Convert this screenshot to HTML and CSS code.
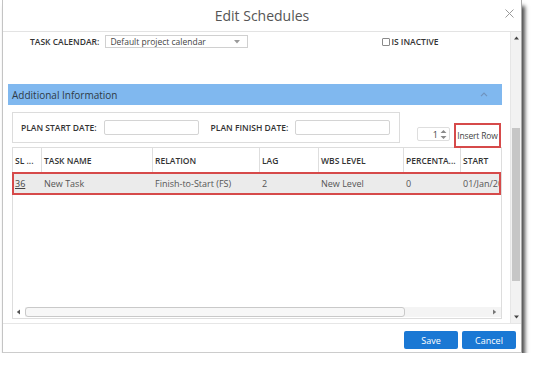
FILE: index.html
```html
<!DOCTYPE html>
<html>
<head>
<meta charset="utf-8">
<link rel="stylesheet" href="styles.css">
</head>
<body>
<div class="page">
  <div class="dialog">
    <div class="header">
      <span class="title">Edit Schedules</span>
      <svg class="close" width="9" height="9" viewBox="0 0 9 9"><path d="M0.5 0.5L8.5 8.5M8.5 0.5L0.5 8.5" stroke="#9a9a9a" stroke-width="1" fill="none"/></svg>
    </div>
    <div class="body">
      <div class="content">
        <div class="cal-row">
          <span class="lbl">TASK CALENDAR:</span>
          <div class="select"><span>Default project calendar</span><svg width="6" height="4" viewBox="0 0 6 4"><path d="M0 0H6L3 3.5Z" fill="#9a9a9a"/></svg></div>
          <div class="chk"><span class="box"></span><span class="lbl">IS INACTIVE</span></div>
        </div>
        <div class="bar">
          <span>Additional Information</span>
          <svg width="8" height="5" viewBox="0 0 8 5"><path d="M1 4.2L4 1.2L7 4.2" stroke="#6f93bd" stroke-width="1.2" fill="none"/></svg>
        </div>
        <div class="toolbar">
          <div class="dates">
            <span class="lbl">PLAN START DATE:</span>
            <span class="input"></span>
            <span class="lbl lbl-finish">PLAN FINISH DATE:</span>
            <span class="input"></span>
          </div>
          <div class="spinner">
            <span class="num">1</span>
            <svg width="7" height="11" viewBox="0 0 7 11"><path d="M0.5 4L3.5 1L6.5 4Z M0.5 7L3.5 10L6.5 7Z" fill="#8a8a8a"/></svg>
          </div>
          <div class="insert">Insert Row</div>
        </div>
        <div class="grid">
          <div class="row head">
            <div class="cell">SL ...</div>
            <div class="cell">TASK NAME</div>
            <div class="cell">RELATION</div>
            <div class="cell">LAG</div>
            <div class="cell">WBS LEVEL</div>
            <div class="cell">PERCENTA...</div>
            <div class="cell">START</div>
          </div>
          <div class="row data">
            <div class="cell"><u>36</u></div>
            <div class="cell">New Task</div>
            <div class="cell">Finish-to-Start (FS)</div>
            <div class="cell">2</div>
            <div class="cell">New Level</div>
            <div class="cell">0</div>
            <div class="cell">01/Jan/2019</div>
          </div>
          <div class="grid-space"></div>
          <div class="hscroll">
            <svg class="arr" width="5" height="6" viewBox="0 0 5 6"><path d="M4 0.5V5.5L0.8 3Z" fill="#555"/></svg>
            <div class="htrack">
              <div class="hthumb"></div>
              <svg class="arr" width="5" height="6" viewBox="0 0 5 6"><path d="M1 0.5V5.5L4.2 3Z" fill="#777"/></svg>
            </div>
          </div>
        </div>
      </div>
      <div class="vscroll">
        <svg width="5" height="4" viewBox="0 0 5 4"><path d="M0 3.5H5L2.5 0.5Z" fill="#444"/></svg>
        <div class="vtrack"><div class="vthumb"></div></div>
        <svg width="5" height="4" viewBox="0 0 5 4"><path d="M0 0.5H5L2.5 3.5Z" fill="#444"/></svg>
      </div>
    </div>
    <div class="footer">
      <button class="btn">Save</button>
      <button class="btn">Cancel</button>
    </div>
  </div>
</div>
</body>
</html>
```
FILE: styles.css
```css
* { box-sizing: border-box; }
body {
  margin: 0;
  background: #fff;
  font-family: "Open Sans", "Liberation Sans", sans-serif;
  color: #333;
}
.page { padding-left: 2px; }
.dialog {
  width: 520px;
  height: 353px;
  background: #fff;
  border-left: 1px solid #c4c4c4;
  border-right: 1px solid #aaa;
  border-bottom: 1px solid #ccc;
  box-shadow: 3px 6px 4px rgba(0,0,0,0.7);
  display: flex;
  flex-direction: column;
}
.header {
  height: 32px;
  flex: none;
  border-bottom: 1px solid #e3e3e3;
  display: flex;
  align-items: center;
  justify-content: center;
  position: relative;
}
.title { font-size: 14px; color: #555; padding-bottom: 1px; }
.close { position: absolute; right: 7px; top: 9px; }
.body {
  flex: none;
  height: 291px;
  display: flex;
}
.content { width: 507px; flex: none; }
.lbl { font-size: 8.5px; font-weight: 600; color: #333; white-space: nowrap; }
.cal-row {
  display: flex;
  align-items: center;
  height: 13px;
  margin-top: 3px;
  padding-left: 27px;
}
.select {
  margin-left: 6px;
  width: 143px;
  height: 13px;
  border: 1px solid #d0d0d0;
  display: flex;
  align-items: center;
  justify-content: space-between;
  padding: 0 7px 0 4px;
  font-size: 8.5px;
  color: #444;
}
.chk { display: flex; align-items: center; margin-left: 134px; }
.box { width: 8px; height: 8px; border: 1px solid #8a8a8a; border-radius: 1px; margin-right: 1px; }
.bar {
  margin: 36px 8px 0 5px;
  height: 21px;
  background: #80b8ef;
  display: flex;
  align-items: center;
  justify-content: space-between;
  padding: 0 14px 0 4px;
  font-size: 10px;
  color: #2f3a46;
}
.toolbar {
  display: flex;
  align-items: flex-end;
  margin: 7px 0 0 9px;
  height: 35px;
}
.dates {
  width: 388px;
  height: 31px;
  margin-bottom: 4px;
  border: 1px solid #dcdcdc;
  display: flex;
  align-items: center;
  padding-left: 8px;
}
.input {
  width: 95px;
  height: 15px;
  border: 1px solid #d4d4d4;
  border-radius: 2px;
  margin-left: 7px;
}
.lbl-finish { margin-left: 12px; }
.spinner {
  margin-left: 17px;
  margin-bottom: 6px;
  width: 33px;
  height: 14px;
  border: 1px solid #dedede;
  border-radius: 2px;
  display: flex;
  align-items: center;
  justify-content: flex-end;
  padding-right: 2px;
  font-size: 9px;
  color: #444;
}
.spinner .num { margin-right: 2px; }
.insert {
  margin-left: 4px;
  width: 47px;
  height: 25px;
  border: 2px solid #d64a4a;
  font-size: 8.5px;
  letter-spacing: -0.15px;
  white-space: nowrap;
  color: #444;
  display: flex;
  align-items: center;
  justify-content: center;
  margin-bottom: -1px;
}
.grid {
  margin-left: 9px;
  width: 490px;
  height: 172px;
  border: 1px solid #dddddd;
  display: flex;
  flex-direction: column;
}
.row {
  display: grid;
  grid-template-columns: 29px 111px 107px 59px 85px 57px 1fr;
  font-size: 8.5px;
  white-space: nowrap;
  overflow: hidden;
}
.row.head { height: 25px; font-weight: 600; color: #333; border-bottom: 1px solid #ddd; }
.row.head .cell { border-right: 1px solid #dedede; }
.row.head .cell:last-child { border-right: none; }
.cell { display: flex; align-items: center; padding-left: 2px; overflow: hidden; }
.row.data {
  height: 21px;
  background: #ebebeb;
  color: #555;
  outline: 2px solid #d64a4a;
  outline-offset: -1px;
  margin-right: 1px;
  font-size: 9px;
}
.row.data .cell:first-child { color: #444; }
.grid-space { flex: 1; }
.hscroll {
  height: 10px;
  margin-bottom: 1px;
  display: flex;
  align-items: center;
  padding-left: 3px;
}
.hscroll .arr { flex: none; }
.htrack {
  margin-left: 4px;
  flex: 1;
  height: 10px;
  background: #f4f4f4;
  display: flex;
  align-items: center;
  justify-content: space-between;
  padding-right: 4px;
}
.hthumb {
  width: 380px;
  height: 10px;
  border: 1px solid #c9c9c9;
  border-radius: 3px;
  background: #f7f7f7;
}
.vscroll {
  width: 11px;
  flex: none;
  background: #f2f2f2;
  border-left: 1px solid #e6e6e6;
  display: flex;
  flex-direction: column;
  align-items: center;
  padding: 4px 0 4px 1px;
}
.vtrack { flex: 1; width: 100%; padding-top: 88px; }
.vthumb { width: 8px; height: 153px; background: #c6c6c6; }
.footer {
  flex: 1;
  border-top: 1px solid #e6e6e6;
  display: flex;
  justify-content: flex-end;
  align-items: flex-start;
  gap: 4px;
  padding: 7px 5px 0 0;
}
.btn {
  height: 18px;
  width: 54px;
  border: none;
  border-radius: 2px;
  background: #1a78d4;
  color: #fff;
  font-family: "Open Sans", "Liberation Sans", sans-serif;
  font-size: 9px;
  padding: 0;
}
```
